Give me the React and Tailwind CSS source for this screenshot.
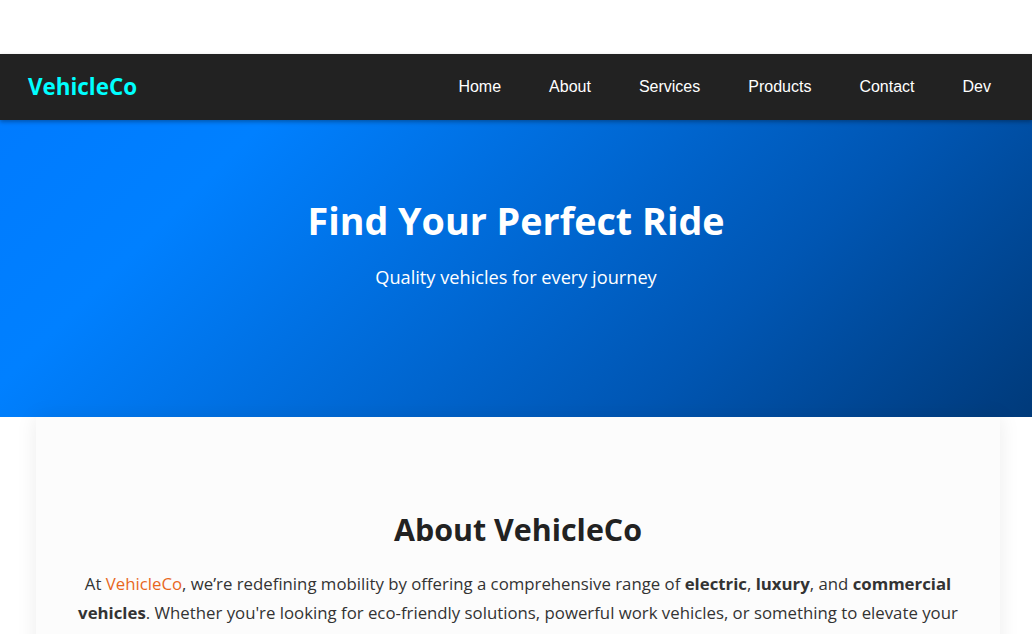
export default function App() {
  const links = ["Home", "About", "Services", "Products", "Contact", "Dev"];
  const seg = { fontFamily: '"Open Sans", "Noto Sans", sans-serif' };
  return (
    <div className="min-h-[634px] bg-white" style={seg}>
      <div className="h-[54px]" />
      <nav className="relative z-10 flex h-[66px] items-center justify-between bg-[#222222] pl-[28px] pr-[17px] shadow-[0_2px_4px_rgba(0,0,0,0.3)]">
        <span className="text-[22.4px] font-bold text-[#00ffff]">VehicleCo</span>
        <ul className="flex items-center" style={{ fontFamily: '"Liberation Sans", Arial, sans-serif' }}>
          {links.map((l) => (
            <li key={l} className="px-6 text-[16px] text-white">{l}</li>
          ))}
        </ul>
      </nav>
      <header className="flex h-[297px] flex-col items-center bg-[linear-gradient(135deg,#007bff_0%,#0080ff_20%,#0056b3_70%,#003a7a_100%)] pt-[78px] text-white">
        <h1 className="text-[37.7px] font-bold leading-[1.2]">Find Your Perfect Ride</h1>
        <p className="mt-[21px] text-[18.2px]">Quality vehicles for every journey</p>
      </header>
      <section className="ml-[36px] w-[964px] bg-[#fcfcfc] px-[40px] pt-[95px] pb-10 text-center shadow-[0_0_20px_rgba(0,0,0,0.08)]">
        <h2 className="text-[30.4px] font-bold leading-[1.2] text-[#222]">About VehicleCo</h2>
        <p className="mt-[21px] text-[16.8px] leading-[29px] text-[#333]">
          At <span className="text-[#e8671c]">VehicleCo</span>, we’re redefining mobility by offering a comprehensive range of <b>electric</b>, <b>luxury</b>, and <b>commercial vehicles</b>. Whether you're looking for eco-friendly solutions, powerful work vehicles, or something to elevate your everyday drive, we have the perfect vehicle for you.
        </p>
      </section>
    </div>
  );
}
